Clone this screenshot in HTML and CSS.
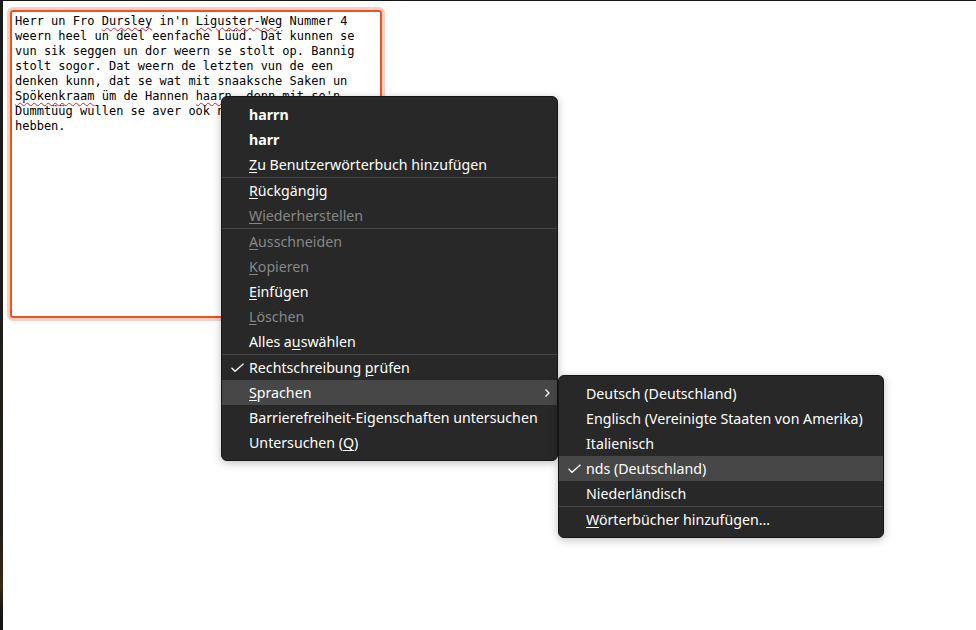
FILE: index.html
```html
<!DOCTYPE html>
<html lang="de">
<head>
<meta charset="utf-8">
<title>Kontextmenü</title>
<link rel="stylesheet" href="styles.css">
</head>
<body>
<div class="screen">
  <div class="desk-edge"></div>
  <main class="page">
    <div class="editor">
<div class="editor-text">Herr un Fro <span class="misspelled">Dursley</span> in'n <span class="misspelled">Liguster-Weg</span> Nummer 4
weern heel un deel eenfache Lüüd. Dat kunnen se
vun sik seggen un dor weern se stolt op. Bannig
stolt sogor. Dat weern de letzten vun de een
denken kunn, dat se wat mit snaaksche Saken un
<span class="misspelled">Spökenkraam</span> üm de Hannen <span class="misspelled">haarn</span>, denn mit so'n
Dummtüüg wullen se aver ook nix mit to doon
hebben.</div>
    </div>
  </main>
</div>

<div class="menu context-menu">
  <div class="item bold">harrn</div>
  <div class="item bold">harr</div>
  <div class="item"><span><u>Z</u>u Benutzerwörterbuch hinzufügen</span></div>
  <div class="sep"></div>
  <div class="item"><span><u>R</u>ückgängig</span></div>
  <div class="item disabled"><span><u>W</u>iederherstellen</span></div>
  <div class="sep"></div>
  <div class="item disabled"><span><u>A</u>usschneiden</span></div>
  <div class="item disabled"><span><u>K</u>opieren</span></div>
  <div class="item"><span><u>E</u>infügen</span></div>
  <div class="item disabled"><span><u>L</u>öschen</span></div>
  <div class="item"><span>Alles a<u>u</u>swählen</span></div>
  <div class="sep"></div>
  <div class="item">
    <svg class="check" width="15" height="10" viewBox="0 0 15 10"><path d="M1.5 4.8 L5 8.3 L13.5 0.8" fill="none" stroke="#ffffff" stroke-width="1.3"/></svg>
    <span>Rechtschreibung <u>p</u>rüfen</span>
  </div>
  <div class="item hl">
    <span><u>S</u>prachen</span>
    <svg class="arrow" width="8" height="10" viewBox="0 0 8 10"><path d="M2.5 1.5 L6 5 L2.5 8.5" fill="none" stroke="#ffffff" stroke-width="1.3"/></svg>
  </div>
  <div class="item"><span>Barrierefreiheit-Eigenschaften untersuchen</span></div>
  <div class="item"><span>Untersuchen (<u>Q</u>)</span></div>
</div>

<div class="menu submenu">
  <div class="item"><span>Deutsch (Deutschland)</span></div>
  <div class="item"><span>Englisch (Vereinigte Staaten von Amerika)</span></div>
  <div class="item"><span>Italienisch</span></div>
  <div class="item hl">
    <svg class="check" width="15" height="10" viewBox="0 0 15 10"><path d="M1.5 4.8 L5 8.3 L13.5 0.8" fill="none" stroke="#ffffff" stroke-width="1.3"/></svg>
    <span>nds (Deutschland)</span>
  </div>
  <div class="item"><span>Niederländisch</span></div>
  <div class="sep"></div>
  <div class="item"><span><u>W</u>örterbücher hinzufügen…</span></div>
</div>
</body>
</html>
```

FILE: styles.css
```css
html, body {
  margin: 0;
  padding: 0;
  background: #ffffff;
}

.screen {
  display: flex;
  height: 630px;
  box-sizing: border-box;
  border-top: 1px solid #161616;
}

.desk-edge {
  width: 3px;
  flex: none;
  background: linear-gradient(#1c1c19 0%, #1e1d1a 50%, #231f17 85%, #3a2a12 93%, #151515 97%);
}

.page {
  flex: 1;
  padding: 9px 0 0 7px;
}

.editor {
  width: 372px;
  height: 308px;
  box-sizing: border-box;
  border: 2px solid #e95420;
  border-radius: 3px;
  box-shadow: 0 0 0 3px rgba(233, 84, 32, 0.28);
  padding: 2px 3px;
  overflow: hidden;
}

.editor-text {
  font-family: "DejaVu Sans Mono", monospace;
  font-size: 12px;
  line-height: 15px;
  white-space: pre;
  color: #000000;
}

.misspelled {
  text-decoration: underline wavy #e01b24;
  text-decoration-thickness: 1px;
  text-underline-offset: 2px;
}

.menu {
  position: absolute;
  box-sizing: border-box;
  background: #282828;
  border: 1px solid #161616;
  border-radius: 6px;
  padding: 5px 0;
  box-shadow: 0 2px 8px rgba(0, 0, 0, 0.25);
  font-family: "Noto Sans", sans-serif;
  font-size: 14.2px;
  color: #ffffff;
}

.context-menu {
  left: 221px;
  top: 96px;
  width: 337px;
}

.submenu {
  left: 558px;
  top: 375px;
  width: 326px;
}

.item {
  position: relative;
  height: 25px;
  display: flex;
  align-items: center;
  padding-left: 27px;
  white-space: nowrap;
}

.item.bold {
  font-weight: 700;
}

.item.disabled {
  color: #878787;
}

.item.hl {
  background: #474747;
}

.item u {
  text-decoration-thickness: 1px;
  text-underline-offset: 2px;
}

.check {
  position: absolute;
  left: 8px;
  top: 8px;
}

.arrow {
  position: absolute;
  right: 6px;
  top: 8px;
}

.sep {
  height: 1px;
  background: #464646;
}
```
